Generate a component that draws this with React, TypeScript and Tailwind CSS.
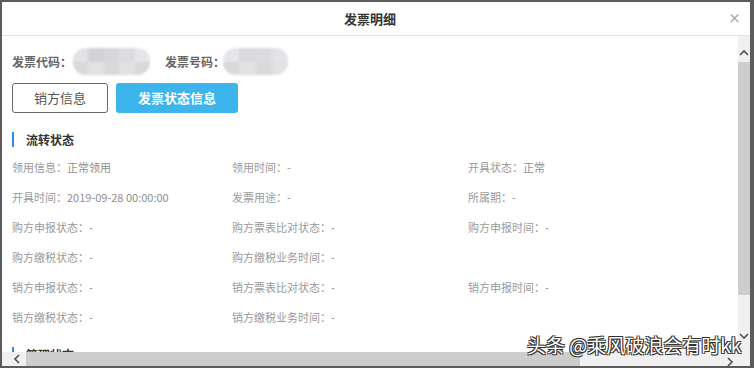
import React from "react";

const font = { fontFamily: '"Noto Sans CJK SC", "Noto Sans", sans-serif' };

function Blob({ w, cols }: { w: number; cols: string[] }) {
  return (
    <div
      className="h-[27px] rounded-[13px] overflow-hidden flex bg-[#ececee] blur-[1px] shrink-0"
      style={{ width: w }}
    >
      {cols.map((c, i) => (
        <div key={i} className="flex-1 flex flex-col">
          <div className="flex-1" style={{ background: c }} />
          <div className="flex-1" style={{ background: i % 2 ? "#e2e2e5" : "#d9d9dc" }} />
        </div>
      ))}
    </div>
  );
}

function Chevron({ dir, className }: { dir: "up" | "down" | "left" | "right"; className?: string }) {
  const pts: Record<string, string> = {
    up: "1,6 5,2 9,6",
    down: "1,2 5,6 9,2",
    left: "6,1 2,5 6,9",
    right: "2,1 6,5 2,9",
  };
  const vb = dir === "up" || dir === "down" ? "0 0 10 8" : "0 0 8 10";
  const size = dir === "up" || dir === "down" ? "w-[10px] h-[8px]" : "w-[8px] h-[10px]";
  return (
    <svg viewBox={vb} className={`${size} ${className ?? ""}`}>
      <polyline points={pts[dir]} fill="none" stroke="#505050" strokeWidth="1.6" />
    </svg>
  );
}

const rows: [string, string][][] = [
  [["领用信息：", "正常领用"], ["领用时间：", "-"], ["开具状态：", "正常"]],
  [["开具时间：", "2019-09-28 00:00:00"], ["发票用途：", "-"], ["所属期：", "-"]],
  [["购方申报状态：", "-"], ["购方票表比对状态：", "-"], ["购方申报时间：", "-"]],
  [["购方缴税状态：", "-"], ["购方缴税业务时间：", "-"], ["", ""]],
  [["销方申报状态：", "-"], ["销方票表比对状态：", "-"], ["销方申报时间：", "-"]],
  [["销方缴税状态：", "-"], ["销方缴税业务时间：", "-"], ["", ""]],
];

export default function App() {
  return (
    <div className="w-[754px] h-[368px] bg-[#5c5c5c] pt-[2px] pl-[2px] pr-[4px] pb-[2px] overflow-hidden" style={font}>
      <div className="w-full h-full bg-white flex flex-col relative overflow-hidden">
        {/* header */}
        <div className="h-[34px] shrink-0 border-b border-[#e3e3e3] flex items-center justify-center pr-[12px] relative">
          <span className="text-[13px] font-bold text-[#333]">发票明细</span>
          <span className="absolute right-[9px] top-[7px] text-[13px] font-bold text-[#aaa] leading-[18px]">×</span>
        </div>

        {/* body */}
        <div className="flex-1 flex min-h-0">
          <div className="flex-1 overflow-hidden pl-[10px]">
            <div className="mt-[12px] h-[27px] flex items-center whitespace-nowrap">
              <span className="text-[12px] font-bold text-[#666] w-[61px] shrink-0">发票代码：</span>
              <Blob w={77} cols={["#e3e3e6", "#d3d3d6", "#d7d7da", "#dcdcdf", "#e6e6e9"]} />
              <span className="text-[12px] font-bold text-[#666] ml-[15px] w-[58px] shrink-0">发票号码：</span>
              <Blob w={65} cols={["#e6e6e9", "#d9d9dc", "#dcdcdf", "#e4e4e7"]} />
            </div>
            <div className="mt-[8px] flex gap-[8px]">
              <div className="w-[96px] h-[30px] border border-[#6a6a6a] rounded-[3px] flex items-center justify-center text-[13px] text-[#555]">
                销方信息
              </div>
              <div className="w-[122px] h-[30px] bg-[#3cb5ec] rounded-[3px] flex items-center justify-center text-[13px] font-bold text-white">
                发票状态信息
              </div>
            </div>

            <div className="mt-[19px] h-[15px] flex items-center">
              <div className="w-[2px] h-[15px] bg-[#2d8cf0]" />
              <span className="ml-[12px] text-[12px] font-bold text-[#333]">流转状态</span>
            </div>

            <div className="mt-[5px] grid grid-cols-[220px_236px_1fr]">
              {rows.flat().map(([l, v], i) => (
                <div key={i} className="h-[30px] flex items-center text-[11px] text-[#9a9a9a] whitespace-nowrap">
                  <span>{l}</span>
                  <span className="text-[#8e8e8e]">{v}</span>
                </div>
              ))}
            </div>

            <div className="mt-[15px] h-[15px] flex items-center">
              <div className="w-[2px] h-[15px] bg-[#2d8cf0]" />
              <span className="ml-[12px] text-[12px] font-bold text-[#333]">管理状态</span>
            </div>
          </div>

          {/* vertical scrollbar */}
          <div className="w-[12px] shrink-0 bg-[#f0f0f0] flex flex-col items-center">
            <div className="h-[26px] flex items-center justify-center pt-[8px]">
              <Chevron dir="up" />
            </div>
            <div className="w-[12px] h-[233px] bg-[#cdcdcd]" />
            <div className="flex-1 flex items-end justify-center pb-[12px]">
              <Chevron dir="down" />
            </div>
          </div>
        </div>

        {/* horizontal scrollbar */}
        <div className="h-[14px] shrink-0 flex bg-[#f0f0f0]">
          <div className="w-[24px] flex items-center justify-center pl-[6px]">
            <Chevron dir="left" />
          </div>
          <div className="w-[554px] bg-[#cdcdcd]" />
          <div className="flex-1 flex items-center justify-end pr-[4px] pt-[6px]">
            <Chevron dir="right" />
          </div>
          <div className="w-[12px]" />
        </div>

        {/* watermark */}
        <div
          className="absolute left-[525px] top-[332px] text-[19px] leading-[22px] text-white whitespace-nowrap [text-shadow:-1px_-1px_0_#333,1px_-1px_0_#333,-1px_1px_0_#333,1px_1px_0_#333]"
        >
          头条 @乘风破浪会有时kk
        </div>
      </div>
    </div>
  );
}
